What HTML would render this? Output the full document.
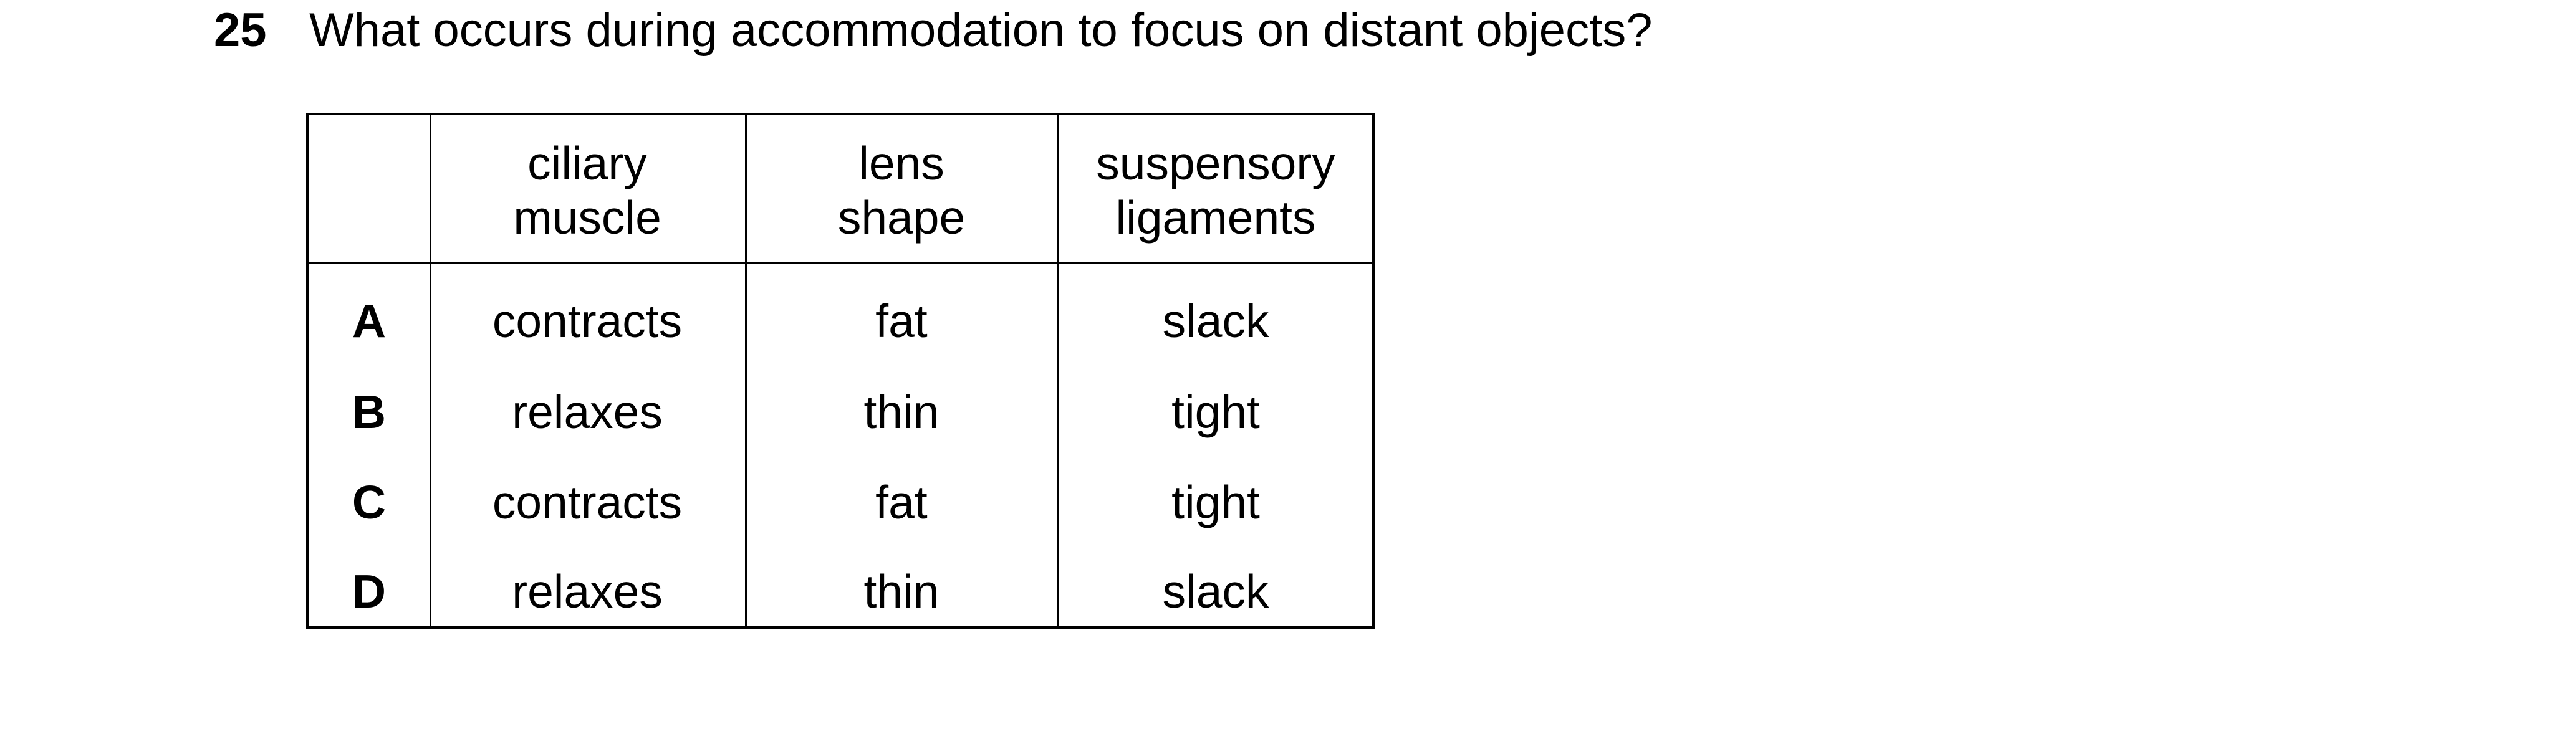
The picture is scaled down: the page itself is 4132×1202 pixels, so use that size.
<!DOCTYPE html>
<html><head><meta charset="utf-8"><style>
html,body{margin:0;padding:0;background:#fff;width:4132px;height:1202px;overflow:hidden;position:relative;font-family:"Liberation Sans",Arial,sans-serif;color:#000}
.t{position:absolute;font-size:76px;line-height:1;white-space:nowrap}
.c{position:absolute;font-size:75px;line-height:1;white-space:nowrap;text-align:center;transform:translateX(-50%)}
.l{position:absolute;background:#000}
</style></head><body>
<div class="t" style="left:343px;top:11px;font-weight:bold">25</div>
<div class="t" style="left:496px;top:11px">What occurs during accommodation to focus on distant objects?</div>

<div class="l" style="left:491px;top:181px;width:1714px;height:4px"></div>
<div class="l" style="left:491px;top:420px;width:1714px;height:4px"></div>
<div class="l" style="left:491px;top:1005px;width:1714px;height:4px"></div>
<div class="l" style="left:491px;top:181px;width:4px;height:828px"></div>
<div class="l" style="left:689px;top:181px;width:3px;height:828px"></div>
<div class="l" style="left:1195px;top:181px;width:3px;height:828px"></div>
<div class="l" style="left:1696px;top:181px;width:3px;height:828px"></div>
<div class="l" style="left:2201px;top:181px;width:4px;height:828px"></div>

<div class="c" style="left:942px;top:225px">ciliary</div>
<div class="c" style="left:942px;top:312px">muscle</div>
<div class="c" style="left:1446px;top:225px">lens</div>
<div class="c" style="left:1446px;top:312px">shape</div>
<div class="c" style="left:1950px;top:225px">suspensory</div>
<div class="c" style="left:1950px;top:312px">ligaments</div>

<div class="c" style="left:592px;top:478px;font-weight:bold">A</div>
<div class="c" style="left:942px;top:478px">contracts</div>
<div class="c" style="left:1446px;top:478px">fat</div>
<div class="c" style="left:1950px;top:478px">slack</div>

<div class="c" style="left:592px;top:624px;font-weight:bold">B</div>
<div class="c" style="left:942px;top:624px">relaxes</div>
<div class="c" style="left:1446px;top:624px">thin</div>
<div class="c" style="left:1950px;top:624px">tight</div>

<div class="c" style="left:592px;top:769px;font-weight:bold">C</div>
<div class="c" style="left:942px;top:769px">contracts</div>
<div class="c" style="left:1446px;top:769px">fat</div>
<div class="c" style="left:1950px;top:769px">tight</div>

<div class="c" style="left:592px;top:912px;font-weight:bold">D</div>
<div class="c" style="left:942px;top:912px">relaxes</div>
<div class="c" style="left:1446px;top:912px">thin</div>
<div class="c" style="left:1950px;top:912px">slack</div>
</body></html>
